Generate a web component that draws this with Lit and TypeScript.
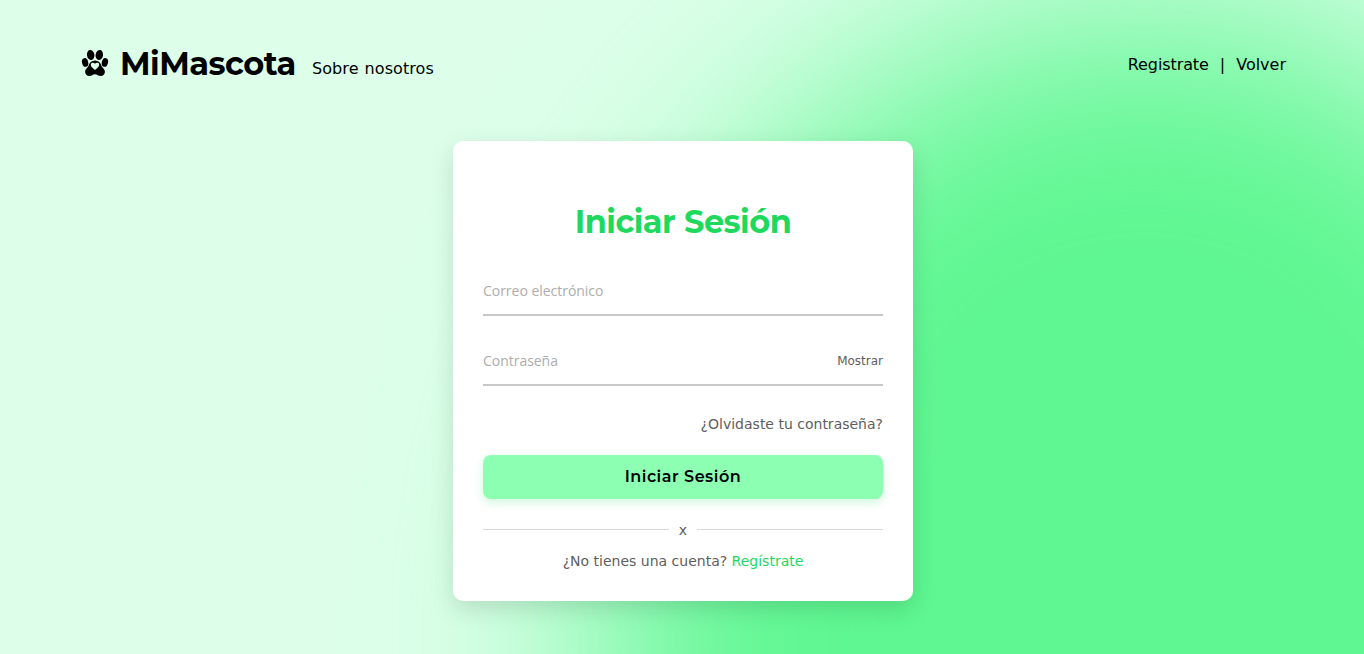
import { LitElement, html, css } from "lit";
import { customElement, state } from "lit/decorators.js";

@customElement("app-root")
export class AppRoot extends LitElement {
  @state() private visible = false;

  static styles = css`
    :host {
      display: block;
      font-family: Verdana, "DejaVu Sans", sans-serif;
      color: #000;
    }
    * { box-sizing: border-box; }
    a { color: inherit; text-decoration: none; }
    .page {
      position: relative;
      height: 100vh;
      min-height: 654px;
      overflow: hidden;
      background: #ddffea;
    }
    .backdrop {
      position: absolute;
      inset: 0;
      width: 100%;
      height: 100%;
    }
    .content { position: relative; }
    .bar {
      display: flex;
      justify-content: space-between;
      height: 141px;
      padding: 44px 78px 0 80px;
      font-size: 16px;
      line-height: 20px;
    }
    .brand { display: flex; align-items: flex-start; }
    .paw { width: 30px; height: 30px; margin-top: 4px; }
    .name {
      margin: 0 0 0 10px;
      width: 176px;
      font: 700 32px/40px Montserrat, "Open Sans", sans-serif;
      letter-spacing: -0.5px;
      white-space: nowrap;
    }
    .about { margin: 15px 0 0 16px; letter-spacing: 0.08px; word-spacing: 0.8px; }
    .links { display: flex; gap: 11px; margin-top: 11px; }
    .links a:first-child { letter-spacing: -0.1px; }
    .card {
      width: 460px;
      height: 460px;
      margin: 0 0 0 453px;
      padding: 61px 30px 0;
      background: #fff;
      border-radius: 10px;
      box-shadow: 0 8px 24px rgba(0, 0, 0, 0.13);
      font-size: 14px;
      color: #5e5e5e;
    }
    h1 {
      margin: 0 0 24px;
      font: 700 32px/40px Montserrat, "Open Sans", sans-serif;
      letter-spacing: -0.5px;
      text-align: center;
      white-space: nowrap;
      color: #1ed95e;
    }
    .field {
      display: flex;
      align-items: center;
      height: 50px;
      border-bottom: 2px solid #c8c8c8;
    }
    .field + .field { margin-top: 20px; }
    input {
      flex: 1;
      min-width: 0;
      padding: 0;
      border: 0;
      outline: 0;
      background: none;
      font: 400 14px "Open Sans", sans-serif;
      letter-spacing: -0.03px;
    }
    input::placeholder { color: #adadad; opacity: 1; }
    .show { padding-top: 2px; font-size: 12px; }
    .forgot { display: block; margin-top: 28px; line-height: 20px; text-align: right; }
    .submit {
      display: block;
      width: 100%;
      height: 44px;
      margin-top: 21px;
      padding: 0 0 2px;
      border: 0;
      border-radius: 8px;
      background: #8cffb3;
      box-shadow: 0 4px 10px rgba(30, 217, 94, 0.2);
      font: 600 16px Montserrat, "Open Sans", sans-serif;
      letter-spacing: 0.5px;
      color: #000;
    }
    .divider { display: flex; align-items: center; gap: 10px; height: 20px; margin-top: 21px; }
    .line { flex: 1; height: 1px; margin-bottom: 2px; background: #dadada; }
    .signup { margin-top: 11px; line-height: 20px; text-align: center; }
    .signup a { color: #1ed95e; }
  `;

  render() {
    return html`
      <div class="page">
        <svg class="backdrop" viewBox="0 0 1364 654" preserveAspectRatio="none">
          <defs>
            <filter id="soft" x="-50%" y="-50%" width="200%" height="200%" color-interpolation-filters="sRGB"><feGaussianBlur stdDeviation="108" /></filter>
          </defs>
          <ellipse cx="1145" cy="640" rx="545" ry="635" fill="#5ef791" filter="url(#soft)" />
        </svg>
        <div class="content">
          <header class="bar">
            <div class="brand">
              <svg class="paw" viewBox="0 0 30 30">
                <ellipse cx="10.700" cy="7" rx="3.700" ry="5.100" transform="rotate(-10 10.7 7)" />
                <ellipse cx="19.300" cy="7" rx="3.700" ry="5.100" transform="rotate(10 19.3 7)" />
                <ellipse cx="5.100" cy="14.400" rx="3.100" ry="4.400" transform="rotate(-14 5.1 14.4)" />
                <ellipse cx="24.900" cy="14.400" rx="3.100" ry="4.400" transform="rotate(14 24.9 14.4)" />
                <path d="M15 12.400c3.600 0 5.600 2.200 6.200 4.900.500 2.300 3.700 3.600 3.700 6.500 0 2.500-1.800 4.200-4.200 4.200-2.600 0-3.300-1.800-5.700-1.800s-3.100 1.800-5.700 1.800c-2.400 0-4.200-1.700-4.200-4.200 0-2.900 3.200-4.200 3.700-6.500.600-2.700 2.600-4.900 6.200-4.900Z" />
                <path fill="#ddffea" d="M15 22c-1.900-1.700-4.200-3.200-4.200-5.300 0-2.300 3-2.600 4.200-.9 1.200-1.700 4.200-1.400 4.200.9 0 2.100-2.300 3.600-4.200 5.300Z" />
              </svg>
              <a class="name" href="#">MiMascota</a>
              <a class="about" href="#">Sobre nosotros</a>
            </div>
            <nav class="links"><a href="#">Registrate</a><span>|</span><a href="#">Volver</a></nav>
          </header>
          <form class="card" @submit=${(e: Event) => e.preventDefault()}>
            <h1>Iniciar Sesión</h1>
            <label class="field"><input type="text" placeholder="Correo electrónico" /></label>
            <label class="field">
              <input type=${this.visible ? "text" : "password"} placeholder="Contraseña" />
              <span class="show" @click=${() => (this.visible = !this.visible)}>Mostrar</span>
            </label>
            <a class="forgot" href="#">¿Olvidaste tu contraseña?</a>
            <button class="submit">Iniciar Sesión</button>
            <div class="divider"><span class="line"></span><span>x</span><span class="line"></span></div>
            <div class="signup">¿No tienes una cuenta? <a href="#">Regístrate</a></div>
          </form>
        </div>
      </div>
    `;
  }
}
